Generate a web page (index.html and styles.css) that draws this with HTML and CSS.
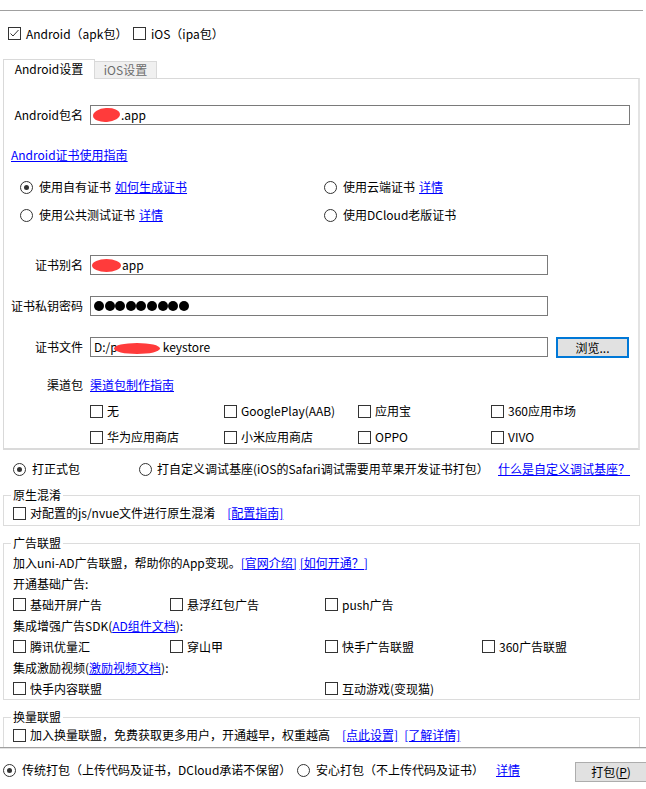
FILE: index.html
```html
<!DOCTYPE html>
<html lang="zh-CN">
<head>
  <meta charset="UTF-8" />
  <title>原生App-云打包</title>
  <link rel="stylesheet" href="styles.css">
</head>
<body>

  <div class="topline"></div>

  <div class="platforms">
    <label class="chk"><span class="box checked"><svg width="11" height="11" viewBox="0 0 11 11"><polyline points="1.5,5.5 4,8 9.5,2" fill="none" stroke="#333" stroke-width="1"/></svg></span>Android（apk包）</label>
    <label class="chk"><span class="box"></span>iOS（ipa包）</label>
  </div>

  <div class="tabs">
    <div class="tab active">Android设置</div>
    <div class="tab">iOS设置</div>
  </div>

  <div class="panel">
    <div class="field pkg">
      <span class="label">Android包名</span>
      <div class="input wide"><span class="blob b-pkg"></span>.app</div>
    </div>

    <a href="#" class="guide">Android证书使用指南</a>

    <div class="cert-grid">
      <label class="rad"><span class="dot on"></span>使用自有证书 <a href="#">如何生成证书</a></label>
      <label class="rad"><span class="dot"></span>使用云端证书 <a href="#">详情</a></label>
      <label class="rad"><span class="dot"></span>使用公共测试证书 <a href="#">详情</a></label>
      <label class="rad"><span class="dot"></span>使用DCloud老版证书</label>
    </div>

    <div class="field alias">
      <span class="label">证书别名</span>
      <div class="input"><span class="blob b-alias"></span>app</div>
    </div>

    <div class="field pwd">
      <span class="label">证书私钥密码</span>
      <div class="input">
        <span class="pw"></span><span class="pw"></span><span class="pw"></span><span class="pw"></span><span class="pw"></span><span class="pw"></span><span class="pw"></span><span class="pw"></span><span class="pw"></span>
      </div>
    </div>

    <div class="field file">
      <span class="label">证书文件</span>
      <div class="input">D:/p<span class="blob b-file"></span>keystore</div>
      <button class="browse">浏览...</button>
    </div>

    <div class="channel">
      <span class="label">渠道包</span>
      <a href="#">渠道包制作指南</a>
    </div>

    <div class="channel-grid">
      <label class="chk"><span class="box"></span>无</label>
      <label class="chk"><span class="box"></span>GooglePlay(AAB)</label>
      <label class="chk"><span class="box"></span>应用宝</label>
      <label class="chk"><span class="box"></span>360应用市场</label>
      <label class="chk"><span class="box"></span>华为应用商店</label>
      <label class="chk"><span class="box"></span>小米应用商店</label>
      <label class="chk"><span class="box"></span>OPPO</label>
      <label class="chk"><span class="box"></span>VIVO</label>
    </div>
  </div>

  <div class="build">
    <label class="rad first"><span class="dot on"></span>打正式包</label>
    <label class="rad second"><span class="dot"></span>打自定义调试基座(iOS的Safari调试需要用苹果开发证书打包）</label>
    <a href="#">什么是自定义调试基座？</a>
  </div>

  <fieldset class="group mix">
    <legend>原生混淆</legend>
    <div class="line">
      <label class="chk"><span class="box"></span>对配置的js/nvue文件进行原生混淆</label>
      <a href="#" class="after">[配置指南]</a>
    </div>
  </fieldset>

  <fieldset class="group ad">
    <legend>广告联盟</legend>
    <div class="line">加入uni-AD广告联盟，帮助你的App变现。<a href="#">[官网介绍]</a>&nbsp;<a href="#">[如何开通？]</a></div>
    <div class="line">开通基础广告:</div>
    <div class="ad-grid">
      <label class="chk"><span class="box"></span>基础开屏广告</label>
      <label class="chk"><span class="box"></span>悬浮红包广告</label>
      <label class="chk"><span class="box"></span>push广告</label>
    </div>
    <div class="line">集成增强广告SDK(<a href="#">AD组件文档</a>):</div>
    <div class="ad-grid">
      <label class="chk"><span class="box"></span>腾讯优量汇</label>
      <label class="chk"><span class="box"></span>穿山甲</label>
      <label class="chk"><span class="box"></span>快手广告联盟</label>
      <label class="chk"><span class="box"></span>360广告联盟</label>
    </div>
    <div class="line">集成激励视频(<a href="#">激励视频文档</a>):</div>
    <div class="ad-grid">
      <label class="chk"><span class="box"></span>快手内容联盟</label>
      <span></span>
      <label class="chk"><span class="box"></span>互动游戏(变现猫)</label>
    </div>
  </fieldset>

  <fieldset class="group swap">
    <legend>换量联盟</legend>
    <div class="line">
      <label class="chk"><span class="box"></span>加入换量联盟，免费获取更多用户，开通越早，权重越高</label>
      <a href="#" class="after">[点此设置]</a>
      <a href="#" class="next">[了解详情]</a>
    </div>
  </fieldset>

  <div class="separator"></div>

  <div class="footer">
    <label class="rad mode1"><span class="dot on"></span>传统打包（上传代码及证书，DCloud承诺不保留）</label>
    <label class="rad mode2"><span class="dot"></span>安心打包（不上传代码及证书）</label>
    <a href="#">详情</a>
    <button class="pack">打包(<u>P</u>)</button>
  </div>

</body>
</html>
```

FILE: styles.css
```css
* {
  margin: 0;
  padding: 0;
  box-sizing: border-box;
}
body {
  width: 646px;
  height: 789px;
  overflow: hidden;
  background: #fff;
  color: #000;
  font-family: "Noto Sans CJK SC", "Liberation Sans", sans-serif;
  font-size: 12px;
  line-height: 16px;
}
a {
  color: #0000ff;
  text-decoration: underline;
}
button {
  font: inherit;
  color: #000;
}
.topline {
  margin-top: 10px;
  width: 643px;
  height: 1px;
  background: #a0a0a0;
}

/* checkbox + radio */
.chk, .rad {
  display: flex;
  align-items: center;
  white-space: nowrap;
  height: 16px;
}
.chk {
  gap: 4px;
}
.rad {
  gap: 6px;
}
.rad a {
  margin-left: -2px;
}
.box {
  width: 13px;
  height: 13px;
  border: 1px solid #333;
  background: #fff;
  flex: none;
}
.box svg {
  display: block;
}
.dot {
  width: 13px;
  height: 13px;
  border: 1px solid #333;
  border-radius: 50%;
  background: #fff;
  flex: none;
  display: flex;
  align-items: center;
  justify-content: center;
}
.dot.on::after {
  content: "";
  width: 5px;
  height: 5px;
  border-radius: 50%;
  background: #333;
}

.platforms {
  display: flex;
  align-items: center;
  height: 13px;
  margin-top: 16px;
  padding-left: 8px;
}
.platforms .chk {
  gap: 5px;
}
.platforms .chk:first-child {
  width: 125px;
}

/* tabs */
.tabs {
  display: flex;
  align-items: flex-end;
  height: 20px;
  margin: 19px 0 -1px 3px;
  position: relative;
  z-index: 1;
}
.tab {
  text-align: center;
  border: 1px solid #d9d9d9;
  border-bottom: none;
}
.tab.active {
  width: 92px;
  height: 20px;
  line-height: 18px;
  background: #fff;
}
.tab:not(.active) {
  width: 62px;
  height: 18px;
  line-height: 16px;
  border-left: none;
  border-bottom: 1px solid #d9d9d9;
  background: #f0f0f0;
  color: #6d6d6d;
}

.panel {
  margin-left: 3px;
  width: 637px;
  height: 372px;
  border: 1px solid #d9d9d9;
  border-right: 2px solid #e3e3e3;
  border-bottom: 2px solid #dadada;
}
.field {
  display: flex;
  align-items: center;
  height: 20px;
}
.label {
  width: 80px;
  padding-right: 1px;
  text-align: right;
  flex: none;
}
.input {
  margin-left: 6px;
  width: 458px;
  height: 20px;
  border: 1px solid #7a7a7a;
  padding-left: 3px;
  display: flex;
  align-items: center;
  white-space: nowrap;
}
.input.wide {
  width: 540px;
  padding-left: 2px;
}
.blob {
  display: inline-block;
  background: #ff3b3b;
  border-radius: 50%;
  flex: none;
}
.b-pkg {
  width: 27px;
  height: 14px;
  margin-right: 1px;
  transform: rotate(-4deg);
}
.b-alias {
  width: 29px;
  height: 13px;
  margin-left: -2px;
  margin-right: 1px;
}
.b-file {
  width: 46px;
  height: 11px;
  margin-left: -4px;
  margin-right: 3px;
  margin-top: 3px;
}
.pw {
  width: 10px;
  height: 10px;
  border-radius: 50%;
  background: #000;
  margin-right: 0.6px;
  flex: none;
}
.pkg {
  margin-top: 26px;
}
.guide {
  display: block;
  width: max-content;
  margin: 22px 0 0 7px;
  height: 16px;
}
.cert-grid {
  display: grid;
  grid-template-columns: 304px 1fr;
  row-gap: 12px;
  margin-top: 16px;
  padding-left: 16px;
}
.alias {
  margin-top: 32px;
}
.pwd, .file {
  margin-top: 21px;
}
.browse {
  margin-left: 8px;
  width: 73px;
  height: 21px;
  border: 2px solid #0078d7;
  background: #e1e1e1;
  line-height: 15px;
}
.channel {
  display: flex;
  align-items: center;
  height: 16px;
  margin-top: 20px;
}
.channel a {
  margin-left: 6px;
}
.channel-grid {
  display: grid;
  grid-template-columns: 134px 134px 133px 1fr;
  row-gap: 10px;
  margin: 10px 0 0 86px;
}

/* build type */
.build {
  display: flex;
  align-items: center;
  height: 16px;
  margin-top: 11px;
  padding-left: 13px;
}
.build .first {
  width: 126px;
}
.build .second {
  width: 359px;
  gap: 5px;
}

/* group boxes */
.group {
  margin: 10px 0 0 3px;
  width: 637px;
  border: 1px solid #dcdcdc;
  padding: 2px 0 4px 9px;
}
.group legend {
  margin-left: -2px;
  padding: 0 2px;
  line-height: 16px;
}
.group .line {
  display: flex;
  align-items: center;
  height: 16px;
  white-space: nowrap;
}
.group .after {
  margin-left: 12px;
}
.group .next {
  margin-left: 6px;
}
.ad {
  margin-top: 9px;
  padding: 1px 0 0 9px;
}
.ad .line {
  height: 21px;
}
.ad-grid {
  display: grid;
  grid-template-columns: 157px 155px 157px 1fr;
  height: 21px;
  align-items: center;
}
.swap {
  margin-top: 9px;
  border-bottom: none;
}
.separator {
  width: 646px;
  height: 2px;
  border-top: 1px solid #a0a0a0;
  background: #e3e3e3;
}

/* footer */
.footer {
  display: flex;
  align-items: flex-start;
  margin-top: 13px;
  padding-left: 3px;
}
.footer .mode1 {
  width: 294px;
}
.footer .mode2 {
  width: 199px;
}
.footer a {
  line-height: 16px;
}
.pack {
  margin-left: auto;
  width: 71px;
  height: 20px;
  border: 1px solid #adadad;
  border-right: none;
  background: #e1e1e1;
  line-height: 18px;
}
```
